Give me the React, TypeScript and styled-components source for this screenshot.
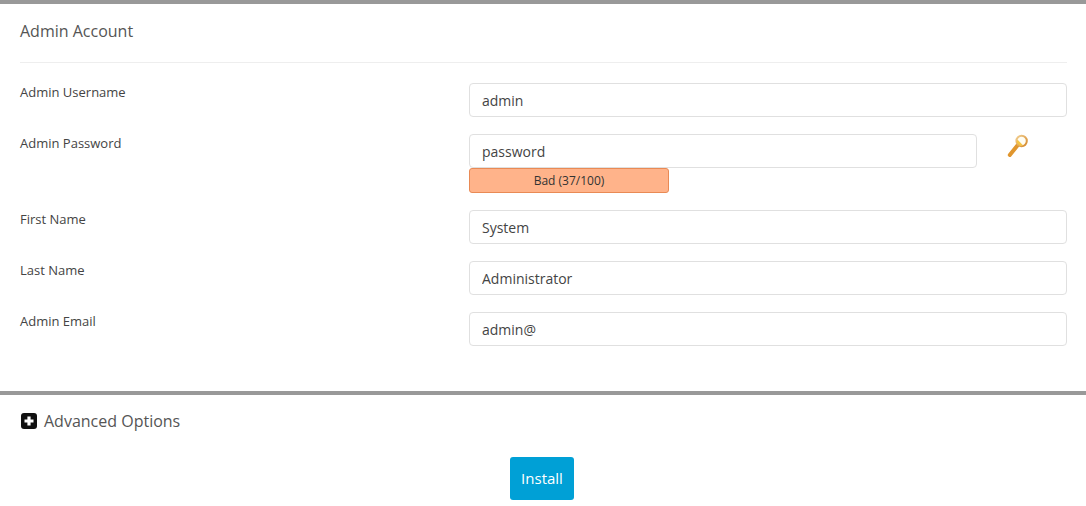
import React from "react";
import styled, { createGlobalStyle } from "styled-components";

const GlobalStyle = createGlobalStyle`
    html, body {
        margin: 0;
        padding: 0;
        background: #fff;
    }
    body {
        font-family: "Open Sans", sans-serif;
        color: #555;
    }
`

const Page = styled.div`
    width: 1086px;
    height: 506px;
    overflow: hidden;
`

const Section = styled.section`
    border-top: 4px solid #999;
    padding: 0 19px 0 20px;
`

const Heading = styled.h2`
    margin: 0;
    height: 59px;
    box-sizing: border-box;
    padding-top: 15px;
    font-size: 16px;
    line-height: 24px;
    font-weight: 400;
    color: #555;
    border-bottom: 1px solid #eee;
`

const Rows = styled.div`
    padding: 20px 0 28px;
    display: flex;
    flex-direction: column;
`

const Row = styled.div`
    display: grid;
    grid-template-columns: 449px 1fr;
    margin-bottom: 17px;
`

const Label = styled.label`
    font-size: 13px;
    line-height: 18px;
    color: #444;
`

const FieldWithKey = styled.div`
    display: flex;
    align-items: flex-start;
`

const PasswordColumn = styled.div`
    width: 508px;
`

const Input = styled.input`
    display: block;
    box-sizing: border-box;
    width: 100%;
    height: 34px;
    padding: 0 12px;
    border: 1px solid #e0e0e0;
    border-radius: 4px;
    background: #fff;
    font-family: "Open Sans", sans-serif;
    font-size: 14px;
    color: #444;
    outline: none;
`

const KeyButton = styled.button`
    display: block;
    border: 0;
    background: none;
    padding: 0;
    margin: 0 0 0 30px;
    width: 22px;
    height: 26px;
    cursor: pointer;
`

const KeySvg = styled.svg`
    display: block;
`

const Strength = styled.div`
    box-sizing: border-box;
    width: 200px;
    height: 25px;
    background: #ffb38a;
    border: 1px solid #e98a55;
    border-radius: 3px;
    text-align: center;
    font-size: 12px;
    line-height: 24px;
    color: #333;
`

const Advanced = styled.div`
    display: flex;
    align-items: center;
    gap: 7px;
    height: 52px;
    box-sizing: border-box;
    padding-left: 1px;
    font-size: 16px;
    color: #555;
`

const Actions = styled.div`
    display: flex;
    justify-content: center;
    margin-top: 10px;
    padding-right: 3px;
`

const InstallButton = styled.button`
    width: 64px;
    height: 43px;
    padding: 0 0 2px;
    border: 0;
    border-radius: 3px;
    background: #00a0d6;
    color: #fff;
    font-family: "Open Sans", sans-serif;
    font-size: 15px;
    cursor: pointer;
`

const KeyIcon = () => (
    <KeySvg width="22" height="26" viewBox="0 0 22 26">
        <defs>
            <linearGradient id="keyGold" x1="0" y1="0" x2="1" y2="1">
                <stop offset="0" stopColor="#f2cf92" />
                <stop offset="1" stopColor="#d4882a" />
            </linearGradient>
        </defs>
        <path d="M2.8 21 L10.4 11.6" stroke="#e0962e" strokeWidth="4" strokeLinecap="round" fill="none" />
        <circle cx="14.6" cy="7" r="5.2" fill="#fffdf2" stroke="url(#keyGold)" strokeWidth="2" />
        <path d="M10.4 5.6 L16 11.2 L13 12 L9.6 8.6 Z" fill="#f5c445" />
    </KeySvg>
)

const PlusIcon = () => (
    <svg width="16" height="16" viewBox="0 0 16 16">
        <rect width="16" height="16" rx="3" fill="#111" />
        <path d="M6.4 3.5h3.2v2.9h2.9v3.2H9.6v2.9H6.4V9.6H3.5V6.4h2.9z" fill="#fff" />
    </svg>
)

const fields = [
    { label: "First Name", value: "System" },
    { label: "Last Name", value: "Administrator" },
    { label: "Admin Email", value: "admin@" },
];

const App: React.FC = () => {
    return (
        <Page>
            <GlobalStyle />
            <Section>
                <Heading>Admin Account</Heading>
                <Rows>
                    <Row>
                        <Label>Admin Username</Label>
                        <Input defaultValue="admin" />
                    </Row>
                    <Row>
                        <Label>Admin Password</Label>
                        <FieldWithKey>
                            <PasswordColumn>
                                <Input defaultValue="password" />
                                <Strength>Bad (37/100)</Strength>
                            </PasswordColumn>
                            <KeyButton aria-label="Generate password"><KeyIcon /></KeyButton>
                        </FieldWithKey>
                    </Row>
                    {fields.map((f) => (
                        <Row key={f.label}>
                            <Label>{f.label}</Label>
                            <Input defaultValue={f.value} />
                        </Row>
                    ))}
                </Rows>
            </Section>
            <Section>
                <Advanced><PlusIcon />Advanced Options</Advanced>
                <Actions>
                    <InstallButton>Install</InstallButton>
                </Actions>
            </Section>
        </Page>
    )
}

export default App;
